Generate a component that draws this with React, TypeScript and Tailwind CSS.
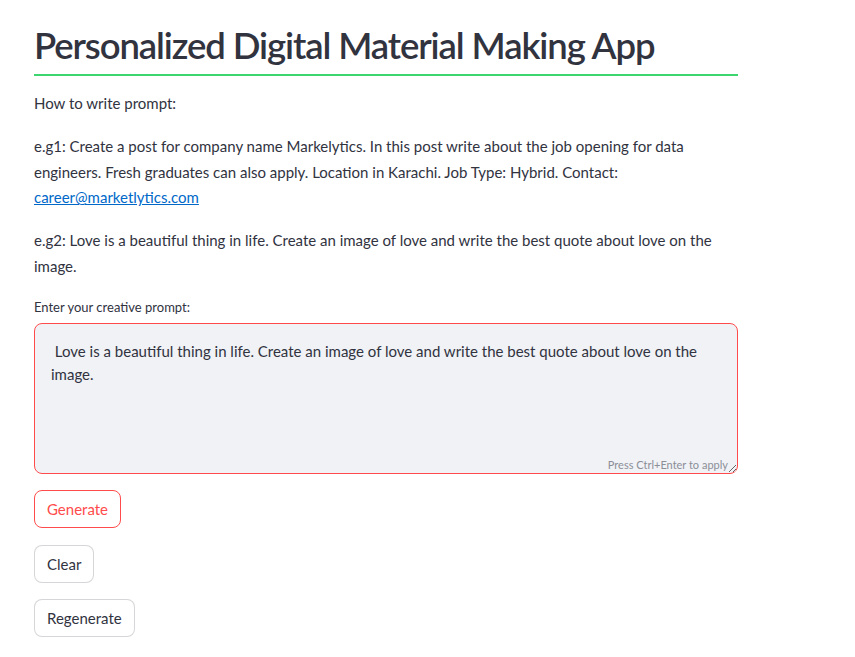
export default function App() {
  const font = { fontFamily: "Lato, 'Noto Sans', sans-serif" };
  return (
    <div className="min-h-screen bg-white text-[#31333f]" style={font}>
      <div className="w-[704px] ml-[34px] pt-[19px]">
        <h1 className="text-[36.5px] font-semibold leading-[52px] tracking-[-0.03em] pb-[3px] border-b-2 border-[#3dd56d] whitespace-nowrap">
          Personalized Digital Material Making App
        </h1>

        <div className="mt-[15px] text-[15px] leading-[25.6px] space-y-[17.4px]">
          <p>How to write prompt:</p>
          <p>
            e.g1: Create a post for company name Markelytics. In this post write about the job opening for data
            engineers. Fresh graduates can also apply. Location in Karachi. Job Type: Hybrid. Contact:{" "}
            <a href="#" className="text-[#0068c9] underline">
              career@marketlytics.com
            </a>
          </p>
          <p>
            e.g2: Love is a beautiful thing in life. Create an image of love and write the best quote about love on the
            image.
          </p>
        </div>

        <label className="block mt-[18px] text-[13px] leading-[20px]">Enter your creative prompt:</label>
        <div className="relative mt-[6px]">
          <textarea
            readOnly
            defaultValue=" Love is a beautiful thing in life. Create an image of love and write the best quote about love on the image."
            className="block w-full h-[151px] resize-y rounded-[8px] border border-[#ff4b4b] bg-[#f0f2f6] px-[16px] py-[16px] text-[15px] leading-[23px] text-[#31333f] outline-none"
          />
          <span className="absolute right-[10px] bottom-[1px] text-[11px] text-[#8c8e96]">Press Ctrl+Enter to apply</span>
        </div>

        <div className="mt-[16px] flex flex-col items-start gap-[16.5px] text-[15px]">
          <button className="h-[38px] rounded-[8px] border border-[#ff4b4b] px-[12px] text-[#ff4b4b] bg-white">
            Generate
          </button>
          <button className="h-[38px] rounded-[8px] border border-[#31333f33] px-[12px] bg-white">Clear</button>
          <button className="h-[38px] rounded-[8px] border border-[#31333f33] px-[12px] bg-white">Regenerate</button>
        </div>
      </div>
    </div>
  );
}
